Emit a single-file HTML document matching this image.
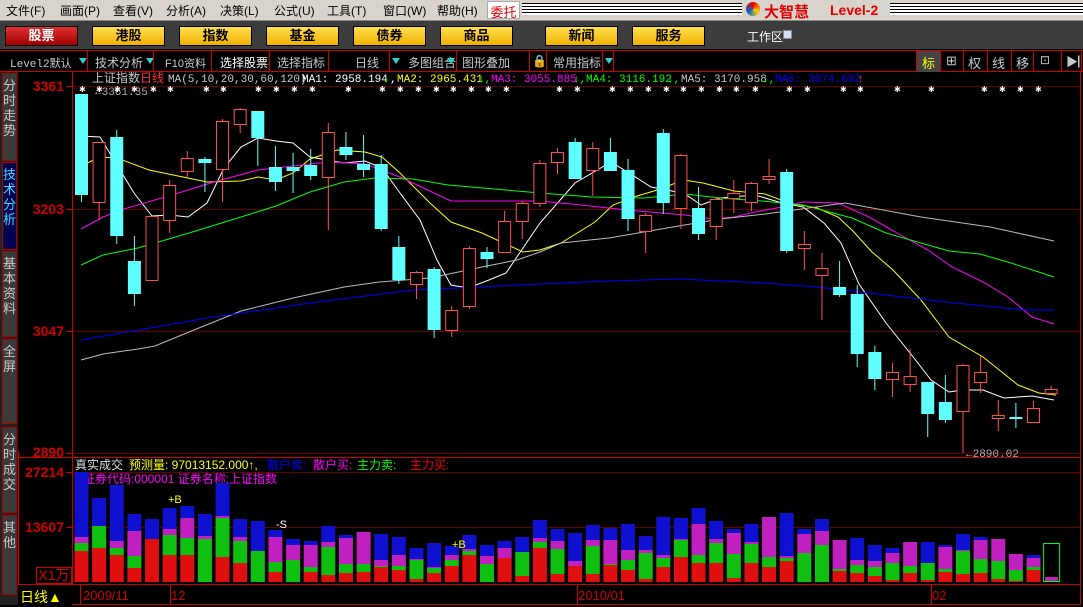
<!DOCTYPE html>
<html><head><meta charset="utf-8"><style>
*{margin:0;padding:0;box-sizing:border-box}
body{width:1083px;height:605px;overflow:hidden;background:#000;position:relative;font-family:"Liberation Sans","Noto Sans CJK SC",sans-serif}
.a{position:absolute;white-space:nowrap}
#menu{left:0;top:0;width:1083px;height:20px;background:#d8d4cc}
#menu span{position:absolute;top:2px;font-size:12px;color:#000}
#btnbar{left:0;top:20px;width:1083px;height:29px;background:#3c3c3c;border-top:1px solid #888}
.btn{position:absolute;top:5px;width:73px;height:20px;background:linear-gradient(#ffe050,#f0b000);border:1px solid #000;font-size:13px;font-weight:bold;text-align:center;line-height:18px;color:#000}
#tool{left:0;top:50px;width:1083px;height:22px;background:#000;border-top:1px solid #c00;border-bottom:1px solid #c00}
#tool span{position:absolute;top:3px;font-size:12px;color:#c8c8c8}
.sep{position:absolute;top:0;width:1px;height:21px;background:#c00}
.tri{position:absolute;top:7px;width:0;height:0;border-left:4px solid transparent;border-right:4px solid transparent;border-top:6px solid #30d0d0}
.tab{position:absolute;left:2px;width:15px;background:#3a3a3a;border:1px solid #a00;color:#c8c8c8;font-size:13px;line-height:15px;text-align:center;padding-top:4px}
.yl{position:absolute;right:1019px;font-size:14px;font-weight:bold;color:#d00000;font-family:"Liberation Sans",sans-serif}
</style></head><body>
<div id="menu" class="a">
<span style="left:6px">文件(F)</span><span style="left:60px">画面(P)</span><span style="left:113px">查看(V)</span><span style="left:166px">分析(A)</span><span style="left:220px">决策(L)</span><span style="left:274px">公式(U)</span><span style="left:327px">工具(T)</span><span style="left:383px">窗口(W)</span><span style="left:437px">帮助(H)</span>
<span style="left:487px;top:1px;width:33px;height:18px;background:#fff;border:1px solid #aaa;color:#e00000;text-align:center;font-size:13px">委托</span>
<div class="a" style="left:522px;top:3px;width:220px;height:12px;background:repeating-linear-gradient(#000 0 1px,#fff 1px 3px)"></div>
<div class="a" style="left:890px;top:3px;width:193px;height:12px;background:repeating-linear-gradient(#000 0 1px,#fff 1px 3px)"></div>
<div class="a" style="left:746px;top:2px;width:14px;height:14px;border-radius:7px;background:conic-gradient(#e00,#fc0,#06c,#e00)"></div>
<span style="left:764px;top:1px;color:#e00000;font-size:15px;font-weight:bold">大智慧</span>
<span style="left:830px;top:2px;color:#e00000;font-size:14px;font-weight:bold">Level-2</span>
</div>
<div id="btnbar" class="a">
<div class="btn" style="left:5px;background:linear-gradient(#e03030,#a00000);color:#fff">股票</div>
<div class="btn" style="left:92px">港股</div><div class="btn" style="left:179px">指数</div><div class="btn" style="left:266px">基金</div><div class="btn" style="left:353px">债券</div><div class="btn" style="left:440px">商品</div><div class="btn" style="left:545px">新闻</div><div class="btn" style="left:632px">服务</div>
<span class="a" style="left:747px;top:7px;color:#fff;font-size:12px">工作区</span>
<div class="a" style="left:783px;top:9px;width:9px;height:9px;background:#cfe0f0;border:1px solid #888"></div>
</div>
<div id="tool" class="a">
<span style="left:10px;font-family:'Liberation Mono','Noto Sans CJK SC',monospace;font-size:11px;top:4px">Level2默认</span><div class="tri" style="left:79px"></div><div class="sep" style="left:87px"></div>
<span style="left:95px">技术分析</span><div class="tri" style="left:146px"></div><div class="sep" style="left:153px"></div>
<span style="left:165px;font-size:11px;top:4px">F10资料</span><div class="sep" style="left:211px"></div>
<span style="left:220px;color:#fff">选择股票</span><div class="sep" style="left:269px"></div>
<span style="left:277px">选择指标</span><div class="sep" style="left:328px"></div>
<span style="left:355px">日线</span><div class="tri" style="left:392px"></div><div class="sep" style="left:389px"></div>
<span style="left:408px">多图组合</span><div class="tri" style="left:447px"></div><div class="sep" style="left:456px"></div>
<span style="left:462px">图形叠加</span><div class="sep" style="left:529px"></div>
<span style="left:532px;color:#aaa">🔒</span><div class="sep" style="left:546px"></div>
<span style="left:553px">常用指标</span><div class="tri" style="left:605px"></div><div class="sep" style="left:602px"></div><div class="sep" style="left:613px"></div>
<div class="a" style="left:917px;top:0;width:23px;height:21px;background:#444"></div>
<span style="left:922px;color:#ff0;font-size:13px;top:2px">标</span>
<span style="left:946px;font-size:13px;top:2px">⊞</span><span style="left:968px;font-size:13px;top:2px">权</span><span style="left:992px;font-size:13px;top:2px">线</span><span style="left:1016px;font-size:13px;top:2px">移</span><span style="left:1040px;font-size:12px;top:2px">⊡</span><span style="left:1066px;font-size:12px;top:2px">▶▏</span>
<div class="sep" style="left:916px"></div><div class="sep" style="left:940px"></div><div class="sep" style="left:963px"></div><div class="sep" style="left:987px"></div><div class="sep" style="left:1011px"></div><div class="sep" style="left:1033px"></div><div class="sep" style="left:1061px"></div><div class="sep" style="left:1081px"></div>
</div>
<div class="a" style="left:0;top:72px;width:18px;height:533px;background:#222"></div>
<div class="tab" style="top:73px;height:88px">分<br>时<br>走<br>势</div>
<div class="tab" style="top:162px;height:88px;background:#000050;color:#30e0ff">技<br>术<br>分<br>析</div>
<div class="tab" style="top:251px;height:86px">基<br>本<br>资<br>料</div>
<div class="tab" style="top:339px;height:85px">全<br>屏</div>
<div class="tab" style="top:427px;height:86px">分<br>时<br>成<br>交</div>
<div class="tab" style="top:515px;height:80px">其<br>他</div>
<div class="yl" style="top:78px">3361</div>
<div class="yl" style="top:201px">3203</div>
<div class="yl" style="top:323px">3047</div>
<div class="yl" style="top:444px">2890</div>
<div class="yl" style="top:464px">27214</div>
<div class="yl" style="top:519px">13607</div>
<div class="a" style="left:36px;top:567px;width:36px;height:17px;border:1px solid #c00;color:#d00;font-size:14px;line-height:15px;text-align:center">X1万</div>
<span class="a" style="left:20px;top:587px;color:#ff0;font-size:14px">日线▲</span>
<span class="a" style="left:83px;top:588px;color:#c00;font-size:13px">2009/11</span>
<span class="a" style="left:171px;top:588px;color:#c00;font-size:13px">12</span>
<span class="a" style="left:578px;top:588px;color:#c00;font-size:13px">2010/01</span>
<span class="a" style="left:932px;top:588px;color:#c00;font-size:13px">02</span>
<svg class="a" style="left:0;top:0" width="1083" height="605" id="sv">
<g stroke="#c00" fill="none" stroke-width="1">
<line x1="72.5" y1="72" x2="72.5" y2="584"/><line x1="18" y1="457.5" x2="1081" y2="457.5"/><line x1="18.5" y1="451" x2="18.5" y2="584"/>
<line x1="18" y1="584.5" x2="1081" y2="584.5"/><line x1="1080.5" y1="72" x2="1080.5" y2="605"/><line x1="72" y1="604.5" x2="1081" y2="604.5"/>
<line x1="80.5" y1="585" x2="80.5" y2="605"/><line x1="170.5" y1="585" x2="170.5" y2="605"/><line x1="577.5" y1="585" x2="577.5" y2="605"/><line x1="931.5" y1="585" x2="931.5" y2="605"/>
</g>
<g stroke="#600" stroke-width="1">
<line x1="73" y1="86.5" x2="1080" y2="86.5"/><line x1="73" y1="209.5" x2="1080" y2="209.5"/><line x1="73" y1="331.5" x2="1080" y2="331.5"/><line x1="73" y1="453.5" x2="1080" y2="453.5"/>
<line x1="73" y1="472.5" x2="1080" y2="472.5"/><line x1="73" y1="527.5" x2="1080" y2="527.5"/>
</g>
<g stroke="#c00"><line x1="66" y1="86.5" x2="72" y2="86.5"/><line x1="66" y1="209.5" x2="72" y2="209.5"/><line x1="66" y1="331.5" x2="72" y2="331.5"/><line x1="66" y1="453.5" x2="72" y2="453.5"/><line x1="66" y1="472.5" x2="72" y2="472.5"/><line x1="66" y1="527.5" x2="72" y2="527.5"/></g>
<g font-size="11" font-family="Liberation Mono,Noto Sans CJK SC,monospace">
<text x="92" y="82" fill="#c8c8c8" font-family="Liberation Sans,Noto Sans CJK SC,sans-serif" font-size="12">上证指数</text>
<text x="140" y="82" fill="#ff3030" font-family="Liberation Sans,Noto Sans CJK SC,sans-serif" font-size="12">日线</text>
<text x="168" y="82" fill="#c8c8c8">MA(5,10,20,30,60,120)</text>
<text x="302" y="82" fill="#fff">MA1: 2958.194</text><text x="383" y="82" fill="#0f0">↓</text><text x="390" y="82" fill="#fff">,</text>
<text x="397" y="82" fill="#ff0">MA2: 2965.431</text><text x="478" y="82" fill="#0f0">↓,</text>
<text x="491" y="82" fill="#f0f">MA3: 3055.885</text><text x="573" y="82" fill="#0f0">↓,</text>
<text x="586" y="82" fill="#0f0">MA4: 3116.192</text><text x="667" y="82" fill="#0f0">↓,</text>
<text x="681" y="82" fill="#c8c8c8">MA5: 3170.958</text><text x="762" y="82" fill="#0f0">↓,</text>
<text x="775" y="82" fill="#00f">MA6: 3074.692</text><text x="857" y="82" fill="#f44">↑</text>
<text x="95" y="95" fill="#aaa">←3361.35</text>
<text x="966" y="457" fill="#aaa">←2890.02</text>
<text x="75" y="469" fill="#ddd" font-family="Liberation Sans,Noto Sans CJK SC,sans-serif" font-size="12">真实成交</text>
<text x="129" y="469" fill="#ff0" font-family="Liberation Sans,Noto Sans CJK SC,sans-serif" font-size="12">预测量: 97013152.000↑,</text>
<text x="267" y="469" fill="#00f" font-family="Liberation Sans,Noto Sans CJK SC,sans-serif" font-size="12">散户卖:</text>
<text x="313" y="469" fill="#f0f" font-family="Liberation Sans,Noto Sans CJK SC,sans-serif" font-size="12">散户买:</text>
<text x="357" y="469" fill="#0f0" font-family="Liberation Sans,Noto Sans CJK SC,sans-serif" font-size="12">主力卖:</text>
<text x="410" y="469" fill="#f00" font-family="Liberation Sans,Noto Sans CJK SC,sans-serif" font-size="12">主力买:</text>
<text x="83" y="483" fill="#f0f" font-family="Liberation Sans,Noto Sans CJK SC,sans-serif" font-size="12">证券代码:000001 证券名称:上证指数</text>
</g>
<g id="ma" fill="none" stroke-width="1"></g>
<g id="cd"></g>
<g id="vol"></g>
<g id="st" fill="#fff" font-size="8"></g>
<g font-size="11" fill="#ff0" font-family="Liberation Sans,sans-serif"><text x="168" y="503">+B</text><text x="452" y="548">+B</text><text x="276" y="528" fill="#fff">-S</text></g>
</svg>
<script>
var NS="http://www.w3.org/2000/svg";
function el(p,t,a){var e=document.createElementNS(NS,t);for(var k in a)e.setAttribute(k,a[k]);p.appendChild(e);return e;}
var C=[[94,195,94,202,0],[142,202,142,220,1],[137,236,130,244,0],[261,294,236,306,0],[216,280,216,280,1],[185,220,180,233,1],[158,171,151,177,1],[159,163,157,192,0],[121,169,119,202,1],[109,124,108,133,1],[111,138,111,166,0],[167,182,146,191,0],[167,171,153,193,0],[165,176,149,180,0],[132,177,123,230,1],[147,155,132,160,0],[164,170,135,177,0],[164,229,155,231,0],[247,280,236,284,0],[272,284,271,299,1],[269,330,267,338,0],[310,330,306,337,1],[248,306,246,309,1],[252,259,247,268,0],[221,252,211,252,1],[203,221,201,239,1],[163,203,160,207,1],[152,162,148,174,1],[142,179,138,179,0],[148,170,142,196,1],[152,171,138,171,0],[170,219,159,231,0],[215,231,213,253,1],[133,203,129,214,0],[155,208,154,229,1],[208,234,187,240,0],[199,226,198,240,1],[193,198,180,213,1],[183,202,182,211,1],[176,179,159,184,1],[172,251,169,253,0],[244,248,231,270,1],[268,275,253,320,1],[287,295,261,297,0],[294,354,285,367,0],[352,379,346,390,0],[372,379,363,397,1],[376,384,349,392,1],[382,414,382,437,0],[402,420,375,423,0],[365,411,364,453,1],[372,382,356,393,1],[415,418,400,431,1],[417,418,403,428,0],[408,422,401,423,1],[389,393,386,395,1]];
var cd=document.getElementById('cd');
function cx(i){return 81.5+i*17.63;}
C.forEach(function(c,i){var x=cx(i),col=c[4]?'#ff5050':'#60ffff';
el(cd,'line',{x1:x,y1:c[2],x2:x,y2:c[3],stroke:col});
if(c[4]){el(cd,'rect',{x:x-6,y:c[0]+.5,width:12,height:Math.max(1,c[1]-c[0]),fill:'#000',stroke:col});
}else el(cd,'rect',{x:x-6.5,y:c[0],width:13,height:Math.max(2,c[1]-c[0]),fill:col});});
var MA={
'#fff':[[80,136],[100,137],[134,193],[152,216],[170,215],[188,217],[207,203],[224,168],[241,147],[258,138],[276,141],[293,143],[310,157],[327,160],[344,163],[365,161],[382,168],[400,193],[420,220],[437,260],[451,285],[468,288],[489,280],[506,273],[540,223],[575,183],[611,162],[637,178],[651,187],[672,191],[685,194],[701,205],[720,198],[755,195],[782,203],[803,207],[824,223],[841,243],[859,284],[886,323],[914,358],[931,380],[949,392],[962,390],[983,390],[1004,398],[1032,396],[1054,400]],
'#ff0':[[81,166],[100,157],[117,158],[149,170],[183,177],[207,182],[241,181],[258,177],[276,180],[293,173],[310,159],[337,150],[365,152],[382,157],[400,173],[430,203],[451,222],[482,233],[523,252],[540,250],[561,243],[595,222],[613,205],[637,196],[654,191],[684,180],[703,183],[734,191],[765,194],[789,203],[817,208],[838,217],[852,230],[872,252],[893,270],[921,300],[949,337],[983,357],[1018,385],[1039,393],[1056,395]],
'#f0f':[[81,229],[103,217],[124,209],[172,195],[214,182],[258,170],[310,164],[331,162],[365,164],[400,177],[434,193],[451,201],[540,201],[581,205],[627,210],[685,215],[713,219],[734,217],[755,212],[782,207],[803,202],[838,203],[869,217],[904,237],[928,250],[952,267],[983,282],[1008,297],[1032,317],[1054,324]],
'#0f0':[[81,265],[103,255],[138,248],[189,233],[241,217],[276,206],[310,192],[344,182],[375,178],[413,179],[448,185],[540,193],[592,197],[644,198],[685,194],[720,198],[762,201],[803,205],[852,218],[886,233],[921,243],[949,251],[980,254],[1011,263],[1054,277]],
'#bbb':[[81,360],[103,354],[138,349],[155,346],[189,332],[241,311],[293,298],[344,287],[379,282],[430,278],[482,267],[517,260],[540,252],[561,243],[609,238],[661,229],[720,219],[765,214],[845,203],[921,217],[990,227],[1054,241]],
'#00f':[[81,340],[207,318],[310,303],[413,290],[540,284],[609,281],[679,279],[765,283],[817,287],[886,295],[955,303],[1025,310],[1054,310]]};
var ma=document.getElementById('ma');
for(var k in MA)el(ma,'polyline',{points:MA[k].map(function(p){return p.join(',')}).join(' '),stroke:k});
var V=[[472,537,543,551],[498,0,526,548],[485,541,548,555],[514,531,556,568],[519,0,0,539],[508,529,535,555],[506,518,538,555],[514,536,539,0],[483,516,518,557],[519,537,541,563],[521,0,551,0],[530,537,562,572],[539,545,560,0],[541,545,567,572],[526,542,547,575],[535,538,564,573],[0,532,564,572],[534,560,566,567],[537,555,566,570],[548,559,560,579],[543,567,568,573],[546,555,560,566],[535,549,551,555],[545,556,564,582],[541,548,0,558],[537,0,552,576],[520,538,542,548],[529,541,549,574],[533,561,0,566],[525,540,546,574],[528,540,564,565],[524,550,560,570],[536,550,553,579],[517,555,558,567],[518,539,540,557],[508,524,555,563],[521,539,543,563],[529,533,554,578],[524,542,544,563],[0,517,557,567],[513,556,558,561],[529,534,553,0],[519,531,545,0],[0,540,569,571],[538,560,565,573],[545,561,567,576],[548,553,563,580],[0,542,566,573],[542,0,563,580],[545,547,569,572],[534,550,551,574],[537,540,559,573],[0,539,561,579],[0,554,570,581],[555,558,567,570]];
var vg=document.getElementById('vol'),cols=['#1010d0','#c020c0','#10c010','#e01010'];
V.forEach(function(v,i){var x=cx(i)-7;
for(var j=0;j<4;j++){if(!v[j])continue;var b=582;for(var m=j+1;m<4;m++){if(v[m]){b=v[m];break;}}
if(b>v[j])el(vg,'rect',{x:x,y:v[j],width:14,height:b-v[j],fill:cols[j]});}});
el(vg,'rect',{x:cx(55)-7.5,y:543.5,width:16,height:38,fill:'none',stroke:'#0f0'});
el(vg,'rect',{x:cx(55)-6,y:577,width:13,height:4,fill:'#c020c0'});
var S=[82,99,117,134,153,170,206,223,258,276,294,312,348,382,400,418,436,453,471,488,506,559,577,612,630,648,666,683,701,719,736,755,789,807,843,860,897,931,984,1002,1020,1038];
var st=document.getElementById('st');
S.forEach(function(x){el(st,'text',{x:x-3,y:92}).textContent='✱';});
</script>
</body></html>
